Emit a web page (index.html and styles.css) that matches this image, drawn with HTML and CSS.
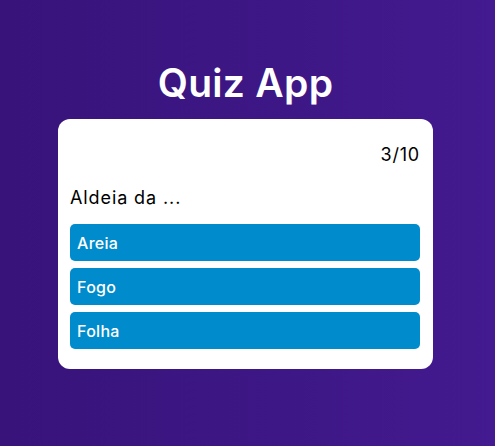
FILE: index.html
```html
<!DOCTYPE html>
<html lang="pt">
<head>
<meta charset="utf-8">
<link rel="stylesheet" href="styles.css">
<title>Quiz App</title>
</head>
<body>
<main class="app">
  <h1 class="title">Quiz App</h1>
  <section class="card">
    <div class="counter">3/10</div>
    <p class="question">Aldeia da ...</p>
    <div class="answers">
      <button class="answer">Areia</button>
      <button class="answer">Fogo</button>
      <button class="answer">Folha</button>
    </div>
  </section>
</main>
</body>
</html>
```
FILE: styles.css
```css
html, body {
  margin: 0;
  padding: 0;
}
body {
  min-height: 100vh;
  background: linear-gradient(to right, #37137a, #431a8f);
  font-family: Inter, "Open Sans", sans-serif;
}
.app {
  display: flex;
  flex-direction: column;
  align-items: center;
  padding: 59px 4px 0 0;
}
.title {
  margin: 0 0 12px;
  color: #ffffff;
  font-size: 39px;
  font-weight: 600;
  line-height: 48px;
  letter-spacing: 0.3px;
}
.card {
  box-sizing: border-box;
  width: 375px;
  height: 250px;
  background: #ffffff;
  border-radius: 12px;
  padding: 24px 13px 12px 12px;
  display: flex;
  flex-direction: column;
}
.counter {
  text-align: right;
  font-size: 18px;
  line-height: 24px;
  color: #000;
  letter-spacing: 0.8px;
}
.question {
  margin: 19px 0 0;
  font-size: 18px;
  line-height: 24px;
  color: #000;
  letter-spacing: 0.9px;
}
.answers {
  margin-top: 14px;
  display: flex;
  flex-direction: column;
  gap: 7px;
}
.answer {
  display: block;
  height: 37px;
  border: 0;
  border-radius: 5px;
  background: #008bcd;
  color: #ffffff;
  text-align: left;
  padding: 0 7px;
  font-family: inherit;
  font-size: 16px;
  font-weight: 500;
  letter-spacing: 0.3px;
}
```
